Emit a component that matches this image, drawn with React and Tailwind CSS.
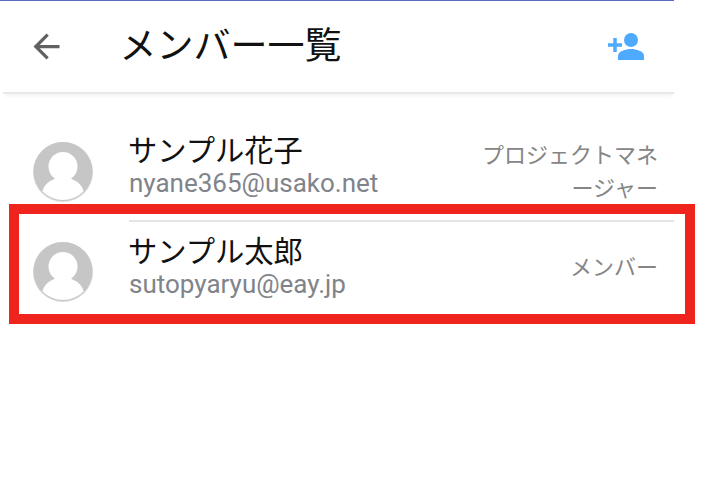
const font = { fontFamily: '"Roboto","Noto Sans CJK JP",sans-serif' };

function Avatar({ id }) {
  return (
    <svg width="60" height="60" viewBox="0 0 60 60" className="shrink-0">
      <defs>
        <clipPath id={id}><circle cx="30" cy="29" r="29" /></clipPath>
      </defs>
      <circle cx="30" cy="30" r="30" fill="#dcdcdc" />
      <circle cx="30" cy="29.500" r="29.500" fill="#c6c6c6" />
      <g clipPath={`url(#${id})`}>
        <circle cx="30" cy="24.500" r="14.500" fill="#fff" />
        <path d="M23 35 C21 38 18 38 15 40.500 C12 43 10.500 45.500 9.500 49 L9 60 L51 60 L50.500 49 C49.500 45.500 48 43 45 40.500 C42 38 39 38 37 35 Z" fill="#fff" />
      </g>
    </svg>
  );
}

function Row({ id, name, email, role, divider, roleClass }) {
  return (
    <div className="flex h-[100px] items-stretch">
      <div className="flex w-[129px] shrink-0 items-center pl-[33px]"><Avatar id={id} /></div>
      <div className={`flex min-w-0 flex-1 items-center pr-[16px] ${divider ? "border-b-2 border-[#e4e4e4]" : ""}`}>
        <div className="flex-1 pb-[10px]">
          <div className="ml-[-1px] text-[29.300px] leading-[34px] text-[#111]">{name}</div>
          <div className="text-[26px] leading-[30px] text-[#80848a]">{email}</div>
        </div>
        <div className={`w-[180px] break-all text-right text-[22px] leading-[33px] text-[#858585] ${roleClass}`}>{role}</div>
      </div>
    </div>
  );
}

export default function App() {
  return (
    <div className="relative h-[494px] w-[710px] overflow-hidden bg-white" style={font}>
      <div className="w-[674px]">
        <div className="h-px bg-[#5c6bc0]" />
        <header className="ml-[3px] flex h-[93px] items-center border-b-2 border-[#e8e8e8] shadow-[0_4px_4px_-2px_rgba(0,0,0,0.05)]">
          <div className="flex w-[119px] shrink-0 justify-start pl-[23.500px]">
            <svg width="39" height="39" viewBox="0 0 24 24" fill="#616161">
              <path d="M20 11H7.830l5.590-5.590L12 4l-8 8 8 8 1.410-1.410L7.830 13H20v-2z" />
            </svg>
          </div>
          <h1 className="ml-[-2.500px] flex-1 text-[37px] font-normal leading-none text-[#111]">メンバー一覧</h1>
          <svg width="36" height="27" viewBox="0 0 36 27" fill="#4daaff" className="mr-[30px]">
            <circle cx="23" cy="7" r="7" />
            <path d="M10 27v-4c0-5 8-7 13-7s13 2 13 7v4H10z" />
            <path d="M5.250 5h3.500v5.250H14v3.500H8.750V19h-3.500v-5.250H0v-3.500h5.250z" />
          </svg>
        </header>
        <div className="pt-[28px]">
          <Row id="a1" name="サンプル花子" email="nyane365@usako.net" role="プロジェクトマネージャー" divider roleClass="pt-[2px]" />
          <Row id="a2" name="サンプル太郎" email="sutopyaryu@eay.jp" role="メンバー" roleClass="pb-[9px]" />
        </div>
      </div>
      <div className="pointer-events-none absolute left-[9px] top-[204px] h-[120px] w-[686px] border-[10px] border-[#ee241d]" />
    </div>
  );
}
